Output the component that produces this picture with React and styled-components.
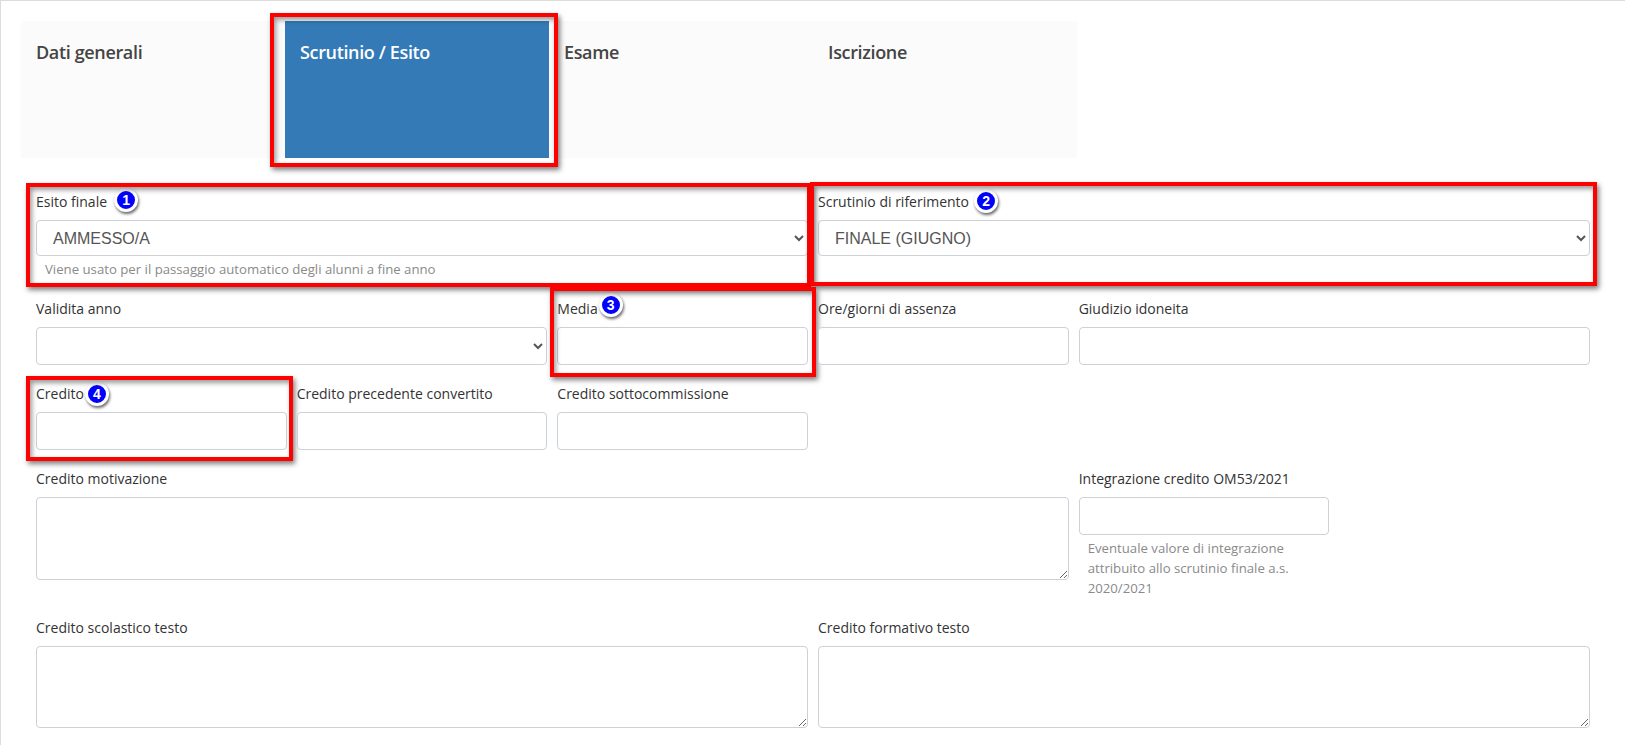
import React from "react";
import styled, { createGlobalStyle } from "styled-components";

const GlobalStyle = createGlobalStyle`
  html, body {
    margin: 0;
    height: 100%;
    background: #fff;
    overflow: hidden;
  }
  * { box-sizing: border-box; }
`;

const Page = styled.div`
  height: 745px;
  padding: 20px 35px 0 20px;
  border-top: 1px solid #dcdcdc;
  border-left: 1px solid #dcdcdc;
  font-family: "Open Sans", sans-serif;
  color: #333;
`;

/* ======== Tabs ======== */
const TabList = styled.ul`
  position: relative;
  display: flex;
  width: 1056px;
  height: 137px;
  margin: 0 0 34px;
  padding: 0;
  list-style: none;
  background: #fbfbfb;
`;

const Tab = styled.li`
  position: relative;
  width: 264px;
  padding: 19px 15px;
  font-size: 18px;
  line-height: 24px;
  font-weight: 600;
  letter-spacing: -0.35px;
  color: ${(p) => (p.$active ? "#fff" : "#444")};
  background: ${(p) => (p.$active ? "#337ab7" : "transparent")};
`;

/* ======== Form ======== */
const Form = styled.form`
  display: grid;
  grid-template-columns: repeat(6, 1fr);
  column-gap: 10px;
  row-gap: 19px;
  margin-left: 15px;
`;

const Field = styled.div`
  position: relative;
  grid-column: span ${(p) => p.$span || 1};
  min-width: 0;
`;

const Label = styled.label`
  display: flex;
  align-items: center;
  height: 19px;
  margin-bottom: 9px;
  font-size: 14px;
  font-weight: 500;
  color: #333;
  white-space: nowrap;
`;

const controlBase = `
  display: block;
  width: 100%;
  background: #fff;
  border: 1px solid #ccd0d7;
  border-radius: 4px;
  outline: none;
`;

const Select = styled.select`
  ${controlBase}
  height: ${(p) => p.$height || 36}px;
  padding: 0 4px 0 12px;
  font-family: "Liberation Sans", Arial, sans-serif;
  font-size: 16px;
  color: #555;
`;

const Input = styled.input`
  ${controlBase}
  height: 38px;
`;

const TextArea = styled.textarea`
  ${controlBase}
  height: ${(p) => p.$height}px;
  resize: vertical;
`;

const Hint = styled.p`
  margin: 3px 0 1px;
  padding-left: 9px;
  font-size: 13.2px;
  line-height: 20px;
  color: #8a8a8a;
  max-width: ${(p) => (p.$wide ? "none" : "225px")};
`;

/* ======== Annotations ======== */
const Highlight = styled.span`
  position: absolute;
  top: ${(p) => p.$top}px;
  right: ${(p) => p.$right}px;
  bottom: ${(p) => p.$bottom}px;
  left: ${(p) => p.$left}px;
  border: 4px solid #f00;
  pointer-events: none;
  box-shadow: 2px 3px 5px rgba(0, 0, 0, 0.5), inset 2px 3px 5px rgba(0, 0, 0, 0.4);
`;

const Badge = styled.span`
  display: inline-flex;
  flex: none;
  align-items: center;
  justify-content: center;
  width: 24px;
  height: 24px;
  margin-left: ${(p) => p.$gap}px;
  margin-top: ${(p) => p.$shift}px;
  border: 3px solid #fff;
  border-radius: 50%;
  background: #00f;
  box-shadow: 1px 2px 3px rgba(0, 0, 0, 0.6);
  font-family: "Liberation Sans", Arial, sans-serif;
  font-size: 14px;
  font-weight: 700;
  color: #fff;
`;

const App = () => {
  return (
    <Page>
      <GlobalStyle />
      <TabList>
        <Tab>Dati generali</Tab>
        <Tab $active>
          Scrutinio / Esito
          <Highlight $top={-8} $right={-9} $bottom={-9} $left={-15} />
        </Tab>
        <Tab>Esame</Tab>
        <Tab>Iscrizione</Tab>
      </TabList>

      <Form>
        <Field $span={3}>
          <Label>
            Esito finale
            <Badge $gap={7} $shift={-3}>1</Badge>
          </Label>
          <Select defaultValue="ammesso">
            <option value="ammesso">AMMESSO/A</option>
          </Select>
          <Hint $wide>Viene usato per il passaggio automatico degli alunni a fine anno</Hint>
          <Highlight $top={-9} $right={-3} $bottom={-7} $left={-10} />
        </Field>
        <Field $span={3}>
          <Label>
            Scrutinio di riferimento
            <Badge $gap={5} $shift={-1}>2</Badge>
          </Label>
          <Select defaultValue="finale">
            <option value="finale">FINALE (GIUGNO)</option>
          </Select>
          <Highlight $top={-10} $right={-7} $bottom={-6} $left={-8} />
        </Field>

        <Field $span={2}>
          <Label>Validita anno</Label>
          <Select $height={38} defaultValue="">
            <option value=""></option>
          </Select>
        </Field>
        <Field>
          <Label>
            Media
            <Badge $gap={1} $shift={-7}>3</Badge>
          </Label>
          <Input />
          <Highlight $top={-12} $right={-8} $bottom={-12} $left={-7} />
        </Field>
        <Field>
          <Label>Ore/giorni di assenza</Label>
          <Input />
        </Field>
        <Field $span={2}>
          <Label>Giudizio idoneita</Label>
          <Input />
        </Field>

        <Field>
          <Label>
            Credito
            <Badge $gap={1} $shift={0}>4</Badge>
          </Label>
          <Input />
          <Highlight $top={-8} $right={-6} $bottom={-11} $left={-10} />
        </Field>
        <Field>
          <Label>Credito precedente convertito</Label>
          <Input />
        </Field>
        <Field>
          <Label>Credito sottocommissione</Label>
          <Input />
        </Field>
        <Field $span={3} />

        <Field $span={4}>
          <Label>Credito motivazione</Label>
          <TextArea $height={83} />
        </Field>
        <Field>
          <Label>Integrazione credito OM53/2021</Label>
          <Input />
          <Hint>Eventuale valore di integrazione attribuito allo scrutinio finale a.s. 2020/2021</Hint>
        </Field>
        <Field />

        <Field $span={3}>
          <Label>Credito scolastico testo</Label>
          <TextArea $height={82} />
        </Field>
        <Field $span={3}>
          <Label>Credito formativo testo</Label>
          <TextArea $height={82} />
        </Field>
      </Form>
    </Page>
  );
};

export default App;
